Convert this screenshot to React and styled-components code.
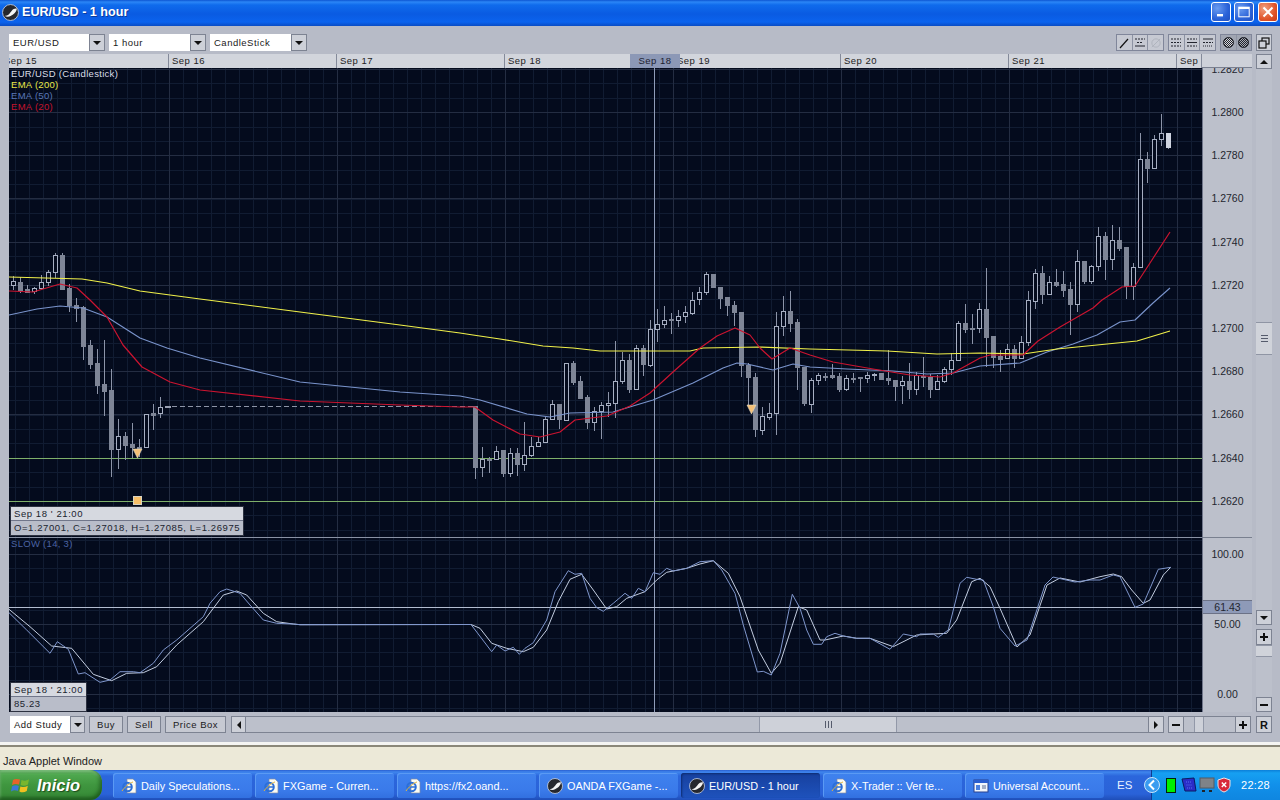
import React from 'react';
import styled, { createGlobalStyle } from 'styled-components';

const Global = createGlobalStyle`
  html, body { margin: 0; padding: 0; background: #b7bbc7; overflow: hidden; }
  * { box-sizing: border-box; }
`;

const UI = `"Liberation Sans", Arial, sans-serif`;
const BG = '#040b1d';

/* ---------- window frame ---------- */
const Win = styled.div`
  width: 1280px; height: 800px; display: flex; flex-direction: column; font-family: ${UI};
`;
const TitleBar = styled.div`
  height: 26px; flex: none; display: flex; align-items: center; padding: 0 2px 2px 2px;
  background: linear-gradient(#0d55d2 0, #2b86f6 2px, #0f6bec 5px, #0a5be2 14px, #0b63ee 22px, #0a4cc4 26px);
`;
const TitleText = styled.span`
  margin-left: 3px; flex: 1; color: #fff; font-size: 12.6px; font-weight: 700;
  text-shadow: 1px 1px 0 #0a3a9e;
`;
const CaptionBtn = styled.div`
  width: 20px; height: 20px; margin-left: ${p => p.$gap}px; border: 1px solid #fff; border-radius: 3px;
  display: flex; align-items: center; justify-content: center;
  background: ${p => p.$close
    ? 'radial-gradient(circle at 30% 30%, #f0a080, #e0552a 60%, #c83a18)'
    : 'radial-gradient(circle at 30% 30%, #6a9cf0, #2a62d8 60%, #2050c0)'};
`;
const Client = styled.div`
  height: 719px; flex: none; display: flex; flex-direction: column;
  padding: 8px 8px 0 9px; background: #b7bbc7; border-bottom: 3px solid #f4f4f2;
`;
const Toolbar = styled.div`
  height: 17px; flex: none; display: flex; align-items: stretch;
`;
const Combo = styled.div`
  display: flex; height: 17px; margin-right: 4px;
`;
const ComboField = styled.div`
  width: ${p => p.$w}px; background: #fff; color: #1a1a1a; font-size: 9.5px; letter-spacing: .5px;
  line-height: 17px; padding-left: 4px;
`;
const ArrowBtn = styled.div`
  width: ${p => p.$w || 16}px; height: ${p => p.$h || 17}px; flex: none; display: flex; align-items: center; justify-content: center;
  background: #cdd0d8; border: 1px solid #7d8392; color: #111;
`;
const Spacer = styled.div` flex: 1; `;
const ToolGroup = styled.div`
  display: flex; width: ${p => p.$w}px; flex: none; margin-right: ${p => p.$mr}px; border: 1px solid #80869a;
  background: ${p => p.$dark ? '#a0a5b2' : '#c6c9d2'};
`;
const ToolBtn = styled.div`
  flex: 1; height: 15px; display: flex; align-items: center; justify-content: center;
  border-left: ${p => p.$first ? 0 : '1px solid #8d93a3'};
`;
const RestoreBtn = styled.div`
  width: 16px; height: 17px; margin-left: 4px; background: #cdd0d8; border: 1px solid #7d8392;
  display: flex; align-items: center; justify-content: center;
`;

/* ---------- main ---------- */
const Main = styled.div`
  margin-top: 3px; height: 658px; flex: none; display: flex;
`;
const PlotColumn = styled.div`
  width: 1243px; flex: none; display: flex; flex-direction: column;
`;
const DateRow = styled.div`
  height: 14px; flex: none; display: flex; position: relative; background: #d2d5dc;
`;
const DateCell = styled.div`
  flex: none; width: ${p => p.$w}px; overflow: hidden; border-right: 1px solid #848a9a; font-size: 9.5px;
  letter-spacing: .5px; line-height: 14px; color: #222; white-space: nowrap;
  padding-left: ${p => p.$pad}px; text-indent: ${p => p.$indent || 0}px;
`;
const DateCursor = styled.div`
  position: absolute; left: 621px; top: 0; width: 50px; height: 14px; background: #8c98b6; color: #1c2130;
  font-size: 9.5px; letter-spacing: .5px; line-height: 14px; text-align: center;
`;
const Body = styled.div`
  height: 644px; flex: none; display: flex;
`;
const ChartArea = styled.div`
  width: 1193px; height: 644px; flex: none; position: relative; overflow: hidden; background: ${BG};
`;
const ChartSvg = styled.svg`
  display: block; width: 1193px; height: 644px;
`;
const Legend = styled.div`
  position: absolute; left: 2px; top: 0; display: flex; flex-direction: column;
`;
const LegendLine = styled.div`
  height: 11px; font-size: 9.5px; line-height: 11px; letter-spacing: .3px; color: ${p => p.$c}; white-space: nowrap;
`;
const SlowLabel = styled(LegendLine)`
  position: absolute; left: 2px; top: 470px;
`;
const InfoBox = styled.div`
  position: absolute; left: 1px; top: ${p => p.$top}px; width: ${p => p.$w}px; border: 1px solid #2c3140;
  background: #b9bdc9; color: #20242e; font-size: 9.5px; letter-spacing: .58px; white-space: nowrap;
`;
const InfoHead = styled.div`
  height: 14px; line-height: 14px; padding-left: 3px; background: #d6d9e0; border-bottom: 1px solid #70768a;
`;
const InfoRow = styled.div`
  height: 14px; line-height: 14px; padding-left: 3px;
`;
const PriceAxis = styled.div`
  width: 50px; height: 644px; flex: none; position: relative; overflow: hidden; background: #bcc0cb;
  border-left: 1px solid #70768a; color: #23262f;
`;
const PriceTick = styled.div`
  position: absolute; left: 0; right: 0; height: 14px; line-height: 14px; text-align: center; font-size: 10.5px;
`;
const PriceTag = styled(PriceTick)`
  background: #8e9ab8; border-top: 1px solid #6c7286; border-bottom: 1px solid #6c7286; line-height: 12px;
`;
const AxisRule = styled.div`
  position: absolute; left: 0; right: 0; height: 1px; background: #79808f;
`;
const CornerCell = styled.div`
  flex: 1; background: #ced1d9; border-bottom: 1px solid #7a8090;
`;
const Scroller = styled.div`
  width: 16px; margin-left: 4px; flex: none; display: flex; flex-direction: column;
`;
const ScrollTrack = styled.div`
  flex: ${p => p.$fixed ? 'none' : 1}; height: ${p => p.$fixed ? p.$fixed + 'px' : 'auto'}; background: #bcc0cb; display: flex; flex-direction: column;
`;
const VThumb = styled.div`
  margin-top: ${p => p.$top}px; height: ${p => p.$h}px; background: #d0d3da; border-top: 1px solid #8f95a4; border-bottom: 1px solid #8f95a4;
  display: flex; align-items: center; justify-content: center; flex: none;
`;
const SmallGap = styled.div` height: 4px; flex: none; `;

/* ---------- bottom ---------- */
const BottomBar = styled.div`
  margin-top: 4px; height: 17px; flex: none; display: flex;
`;
const WhiteBtn = styled.div`
  width: 60px; background: #fff; color: #151515; font-size: 9.5px; letter-spacing: .5px; line-height: 17px; padding-left: 4px; margin-left: 1px;
`;
const TextBtn = styled.div`
  width: ${p => p.$w}px; margin-left: ${p => p.$ml}px; background: #c6c9d2; border: 1px solid #7d8392; color: #1a1a1a;
  font-size: 9.5px; letter-spacing: .5px; line-height: 15px; text-align: center;
`;
const HTrack = styled.div`
  flex: ${p => p.$w ? 'none' : 1}; width: ${p => p.$w ? p.$w + 'px' : 'auto'}; background: #bcc0cb; border-top: 1px solid #7d8392; border-bottom: 1px solid #7d8392;
  display: flex;
`;
const HThumb = styled.div`
  margin-left: ${p => p.$left}px; width: ${p => p.$w}px; background: #ced1d9; border-left: 1px solid #9298a8; border-right: 1px solid #9298a8;
  display: flex; align-items: center; justify-content: center;
`;
const GapH = styled.div` width: ${p => p.$w}px; flex: none; `;

/* ---------- status + taskbar ---------- */
const StatusBar = styled.div`
  height: 25px; flex: none; background: #ece9d8; border-top: 2px solid #8a8778; font-size: 11px; color: #222;
  padding: 7px 0 0 3px; line-height: 15px;
`;
const TaskBar = styled.div`
  height: 30px; flex: none; display: flex; align-items: stretch;
  background: linear-gradient(#2a5fd0 0, #3f86ee 2px, #2b66dc 6px, #2a62d8 24px, #1f4eb8 30px);
`;
const StartBtn = styled.div`
  width: 102px; flex: none; display: flex; align-items: center; padding-left: 11px; gap: 6px;
  border-radius: 0 12px 12px 0; box-shadow: inset -2px -2px 4px #1c5a1c, inset 0 2px 3px #8fd08f;
  background: linear-gradient(#3c8a3c 0, #4fa84f 15%, #3f963f 50%, #388c38 85%, #2a6e2a 100%);
`;
const StartText = styled.span`
  color: #fff; font-size: 16.5px; font-style: italic; font-weight: 700; text-shadow: 1px 1px 1px #1c4a1c;
`;
const Tasks = styled.div`
  flex: 1; display: flex; gap: 3px; padding: 3px 0 2px 11px;
`;
const Task = styled.div`
  width: 139px; flex: none; display: flex; align-items: center; gap: 4px; padding-left: 8px; border-radius: 3px;
  color: #fff; font-size: 10.9px; white-space: nowrap; overflow: hidden;
  background: ${p => p.$on ? 'linear-gradient(#17409e, #1e52bc)' : 'linear-gradient(#3f82ee, #3a7aea 70%, #3270e0)'};
  box-shadow: ${p => p.$on ? 'inset 1px 1px 2px #0e2c70' : 'inset 1px 1px 0 #5a9af4'};
`;
const Lang = styled.div`
  width: 46px; flex: none; color: #e8f0ff; font-size: 11.5px; line-height: 30px; padding-left: 12px;
`;
const Tray = styled.div`
  width: 129px; flex: none; display: flex; align-items: center; color: #fff; font-size: 11px;
  background: linear-gradient(#0c7fd8 0, #16a0f2 3px, #1190ea 50%, #0f86e0 100%); border-left: 1px solid #0f3c90;
`;
const Clock = styled.span` margin-left: 10px; letter-spacing: .3px; `;
const GreenBar = styled.div`
  width: 10px; height: 15px; background: #00f000; border: 1px solid #05210a; margin: 0 5px 0 6px; flex: none;
`;

/* ---------- icons ---------- */
const Ball = ({ size = 16 }) => (
  <svg width={size} height={size} viewBox="0 0 16 16" style={{ flex: 'none' }}>
    <circle cx="8" cy="8" r="7.5" fill="#26282e" stroke="#c8d2e6" strokeWidth=".8" />
    <path d="M2.5 11 C6 11 7 9 9 6.5 C10.5 4.8 12.5 4 14 4.5 C13.5 8 10.5 10 8.5 11 C6.5 12.2 4 12.2 2.5 11Z" fill="#f4f4f4" />
  </svg>
);
const IE = () => (
  <svg width="16" height="16" viewBox="0 0 16 16" style={{ flex: 'none' }}>
    <path d="M6 1h6l3 3v11H6z" fill="#fbfbf2" stroke="#7f8ba8" strokeWidth=".7" />
    <circle cx="6.5" cy="9" r="4.3" fill="none" stroke="#2c6fd8" strokeWidth="2" />
    <path d="M2.5 9h8" stroke="#2c6fd8" strokeWidth="1.6" />
    <path d="M1 13c2-3 7-8 11-9" stroke="#e5b73c" strokeWidth="1" fill="none" />
  </svg>
);
const AppWin = () => (
  <svg width="16" height="16" viewBox="0 0 16 16" style={{ flex: 'none' }}>
    <rect x="1" y="2" width="14" height="12" fill="#f2f5fb" stroke="#27408f" />
    <rect x="1" y="2" width="14" height="3" fill="#2a5ed0" />
    <rect x="3" y="7" width="4" height="5" fill="#4a7fe0" />
    <path d="M9 8h4M9 10h4" stroke="#5a6a90" />
  </svg>
);
const Flag = () => (
  <svg width="20" height="20" viewBox="0 0 20 20" style={{ flex: 'none' }}>
    <path d="M2 5 C4 3.6 6 3.6 9 4.6 L8 9.5 C5.5 8.6 3.4 8.6 1 10Z" fill="#e8632a" />
    <path d="M10.5 5 C13 6 15 6 18 4.2 L17 9.4 C14.4 11 12 11 9.6 10Z" fill="#78b62e" />
    <path d="M1 11.4 C3.4 10 5.5 10 7.8 11 L6.8 16 C4.6 15 2.5 15 0 16.5Z" fill="#3b78d8" />
    <path d="M9.4 11.4 C12 12.4 14.2 12.4 16.8 10.8 L15.8 16 C13 17.6 10.8 17.6 8.4 16.4Z" fill="#f0c020" />
  </svg>
);
const Tri = ({ dir }) => {
  const d = { down: 'M0 0h8L4 4z', up: 'M0 4h8L4 0z', left: 'M4 0v8L0 4z', right: 'M0 0v8l4-4z' }[dir];
  const vert = dir === 'left' || dir === 'right';
  return <svg width={vert ? 4 : 8} height={vert ? 8 : 4} viewBox={vert ? '0 0 4 8' : '0 0 8 4'}><path d={d} fill="#111" /></svg>;
};
const Sign = ({ plus }) => (
  <svg width="8" height="8" viewBox="0 0 8 8"><path d={plus ? 'M0 3h8v2H0zM3 0h2v8H3z' : 'M0 3h8v2H0z'} fill="#111" /></svg>
);
const Lines = ({ v }) => {
  const rows = {
    a: <><path d="M1 3h10" strokeDasharray="2 1" /><path d="M3 6.5h6" strokeDasharray="2 1" /><path d="M1 10h10" /></>,
    b: <><path d="M1 3h10" strokeDasharray="2 1" /><path d="M1 6.5h10" strokeDasharray="2 1" /><path d="M1 10h10" strokeDasharray="2 1" /></>,
    c: <><path d="M1 3h10" strokeDasharray="2 1" /><path d="M1 6.5h10" /><path d="M1 10h10" strokeDasharray="2 1" /></>,
    d: <><path d="M1 3h10" /><path d="M1 6.5h10" strokeDasharray="2 1" /><path d="M1 10h10" strokeDasharray="1 1" /></>,
  }[v];
  return <svg width="12" height="13" viewBox="0 0 12 13" fill="none" stroke="#22252e">{rows}</svg>;
};
const Hatch = ({ id, light }) => (
  <svg width="11" height="11" viewBox="0 0 11 11">
    <defs>
      <pattern id={id} width="2" height="2" patternUnits="userSpaceOnUse">
        <rect width="2" height="2" fill={light ? '#d8dae0' : '#a8acb6'} />
        <rect width="1" height="1" fill="#22242c" /><rect x="1" y="1" width="1" height="1" fill="#22242c" />
      </pattern>
    </defs>
    <circle cx="5.5" cy="5.5" r="5" fill={`url(#${id})`} stroke="#1c1e26" />
  </svg>
);
const Grip = ({ rotate }) => (
  <svg width="7" height="7" viewBox="0 0 7 7" style={rotate ? { transform: 'rotate(90deg)' } : undefined}>
    <path d="M.5 0v7M3.5 0v7M6.5 0v7" stroke="#555b6c" />
  </svg>
);
const WinGlyph = ({ kind }) => (
  <svg width="12" height="12" viewBox="0 0 12 12" fill="none" stroke="#fff">
    {kind === 'min' && <rect x="2" y="8" width="6" height="2.4" fill="#fff" stroke="none" />}
    {kind === 'max' && <><rect x=".8" y="1.2" width="10.4" height="9.6" strokeWidth="1" /><path d="M.8 2h10.4" strokeWidth="2" /></>}
    {kind === 'close' && <path d="M1.5 1.5l9 9M10.5 1.5l-9 9" strokeWidth="2" />}
  </svg>
);

/* ---------- chart data ---------- */
const conv = (ox, oy, rows) => rows.map(([z, hi, t, b, lo, k]) => ({
  c: 13 + 7 * Math.round((ox + z / 3 - 13) / 7),
  hi: oy + hi / 3, t: oy + t / 3, b: oy + b / 3, lo: oy + lo / 3, k,
}));
const candles = [
  ...conv(0, 240, [
    [40,107,124,134,150,'h'],[61,112,125,150,160,'f'],[82,135,148,155,160,'f'],[103,140,143,153,162,'h'],
    [124,106,127,143,145,'h'],[145,90,97,127,137,'h'],[166,38,45,97,115,'h'],[187,38,45,146,146,'f'],
    [208,132,143,195,216,'f'],[229,173,195,203,245,'f'],[250,198,200,317,360,'f'],[271,300,316,371,388,'f'],
    [292,326,370,434,462,'f'],[313,300,433,452,527,'f'],[334,387,451,626,710,'f'],[355,538,589,626,688,'h'],
    [376,576,589,614,660,'f'],[397,549,613,620,654,'f'],[418,597,621,623,650,'f'],[439,522,523,621,625,'h'],
    [460,492,520,524,570,'f'],[481,472,502,520,533,'h'],
  ]),
  ...conv(460, 260, [
    [46,438,438,620,658,'f'],[67,562,597,620,652,'h'],[88,590,596,598,640,'f'],[109,557,572,598,600,'h'],
    [130,571,571,638,650,'f'],[151,565,580,638,650,'h'],[172,563,580,611,648,'f'],[193,487,584,611,632,'h'],
    [214,530,559,584,590,'h'],[235,530,545,559,560,'h'],[256,470,478,545,546,'h'],[277,420,433,478,480,'h'],
    [298,433,433,478,508,'f'],[319,310,310,480,484,'h'],[340,304,310,365,374,'f'],[361,348,364,414,418,'f'],
    [382,405,412,487,507,'f'],[403,440,452,487,512,'h'],[424,425,436,452,538,'h'],[445,395,428,436,470,'h'],
    [466,243,364,428,475,'h'],[487,276,301,364,372,'h'],[508,282,301,386,400,'f'],[529,255,265,386,388,'h'],
    [550,255,265,313,348,'f'],[571,180,206,316,322,'h'],[592,148,193,206,245,'h'],[613,138,181,193,205,'h'],
    [634,160,177,179,222,'f'],[655,150,169,181,200,'h'],[676,138,157,169,188,'h'],[697,95,119,158,165,'h'],
    [718,82,95,118,135,'h'],[739,37,43,95,105,'h'],[760,43,43,82,82,'f'],[781,82,82,113,147,'f'],
    [802,112,112,134,168,'f'],[823,122,134,155,198,'f'],[844,155,155,316,352,'f'],[865,310,314,352,440,'f'],
    [886,340,352,508,530,'f'],
  ]),
  ...conv(740, 260, [
    [67,440,468,510,525,'h'],[88,430,458,470,480,'h'],[109,155,199,458,525,'h'],[130,108,154,199,228,'h'],
    [151,93,154,188,215,'f'],[172,178,187,322,390,'f'],[193,321,321,430,438,'f'],[214,355,361,431,458,'h'],
    [235,340,346,361,376,'h'],[256,340,348,350,362,'f'],[277,312,346,351,358,'f'],[298,340,349,386,396,'f'],
    [319,345,355,386,392,'h'],[340,340,355,357,370,'f'],[361,350,351,353,396,'f'],[382,335,346,355,370,'h'],
    [403,340,341,346,362,'h'],[424,340,340,357,360,'f'],[445,270,355,361,375,'f'],[466,361,361,378,424,'f'],
    [487,348,364,376,432,'h'],[508,308,364,388,416,'f'],[529,335,345,388,406,'h'],[550,290,348,352,382,'f'],
    [571,342,352,388,414,'f'],[592,345,364,388,390,'h'],[613,320,326,364,370,'h'],[634,280,301,326,345,'h'],
    [655,184,190,301,303,'h'],[676,133,190,206,218,'f'],[697,162,203,205,252,'f'],[718,130,148,204,220,'h'],
  ]),
  ...conv(980, 100, [
    [19,505,628,710,800,'f'],[40,708,708,770,803,'f'],[61,750,768,776,815,'f'],[82,732,748,775,776,'h'],
    [103,735,748,775,805,'f'],[124,708,727,775,775,'h'],[145,573,601,727,738,'h'],[166,508,520,602,628,'h'],
    [187,498,520,581,612,'f'],[208,528,547,581,582,'h'],[229,508,547,554,560,'f'],[250,513,553,570,592,'f'],
    [271,545,568,611,704,'f'],[292,450,484,611,635,'h'],[313,484,484,543,552,'f'],[334,496,499,543,552,'h'],
    [355,380,409,499,513,'h'],[376,396,409,476,540,'f'],[397,376,421,476,510,'h'],[418,381,421,443,452,'f'],
    [439,442,442,557,598,'f'],[460,490,502,557,600,'h'],[481,99,178,502,502,'h'],[502,156,178,203,248,'f'],
    [523,105,118,203,203,'h'],[544,42,100,118,137,'h'],[565,100,100,140,146,'l'],
  ]),
];
const pts = a => a.map(p => p.join(',')).join(' ');
const ema200 = [[9,277],[82,279],[107,283],[140,291],[200,299],[300,312],[400,325],[460,333],[473,335],[500,339],[543,346],[573,348],[600,351],[690,351],[703,348],[760,347],[810,349],[887,351],[937,354],[980,353],[1023,354],[1057,349],[1137,341],[1170,331]];
const ema20 = [[9,291],[33,292],[60,284],[77,288],[90,300],[107,317],[123,345],[142,367],[170,382],[200,390],[300,401],[400,405],[460,407],[475,407],[493,420],[520,434],[540,437],[560,432],[575,420],[607,416],[630,406],[650,393],[673,372],[700,348],[717,336],[735,328],[750,335],[760,348],[772,359],[790,348],[810,355],[833,362],[873,369],[910,375],[940,377],[953,373],[980,358],[990,355],[1023,355],[1038,341],[1060,327],[1093,308],[1102,300],[1122,287],[1135,286],[1150,263],[1170,232]];
const ema50 = [[9,315],[37,309],[60,306],[83,308],[107,317],[140,338],[167,348],[200,358],[300,382],[400,392],[460,396],[480,400],[527,414],[550,417],[570,413],[613,412],[653,400],[693,383],[723,368],[737,363],[747,364],[773,370],[793,364],[810,367],[847,369],[893,371],[927,374],[953,373],[980,366],[1020,363],[1047,352],[1073,344],[1097,335],[1120,322],[1135,320],[1153,303],[1170,288]];

const zp = (ox, oy, a) => a.map(([x, y]) => [+(ox + x / 3).toFixed(1), +(oy + y / 3).toFixed(1)]);
const fast = [
  ...zp(0,490,[[27,368],[80,420],[150,490],[172,455],[205,478],[235,552],[255,548],[300,577],[330,570],[360,545],[400,545],[420,548],[460,520],[490,480],[530,450],[610,380],[630,340],[660,305],[680,297],[720,310],[750,345],[790,390],[830,400],[880,402],[900,404]]),
  [471,624.5],
  ...zp(400,540,[[275,335],[290,315],[315,333],[340,322],[358,343],[375,325],[400,308],[440,240],[465,155],[505,92],[525,103],[545,100],[570,175],[590,203],[610,214],[640,190],[675,160],[695,175],[715,145],[735,155],[760,98],[780,103],[800,85],[820,93],[860,85],[900,65]]),
  ...zp(700,540,[[40,62],[65,90],[105,160],[130,255],[172,396],[190,394],[214,405],[240,340],[277,163],[300,205],[320,270],[340,313],[365,313],[380,290],[405,280],[430,288],[470,295],[510,295],[570,328],[610,282],[650,290],[660,282],[700,282],[715,292],[745,270],[780,130],[800,112],[830,118],[850,120],[880,200],[900,265]]),
  [1015,646],[1027,640],[1045,585],[1053,577],[1075,582],[1090,580],
  ...zp(1100,530,[[0,150],[40,135],[60,140],[105,232],[130,222],[175,118],[212,112]]),
];
const slow = [
  ...zp(0,490,[[27,358],[90,410],[155,468],[215,475],[280,553],[335,572],[380,550],[430,548],[470,530],[530,465],[610,395],[640,355],[670,315],[710,303],[740,315],[790,370],[830,395],[880,402],[900,404]]),
  [471,624.5],
  ...zp(400,540,[[240,265],[275,310],[320,325],[370,335],[400,322],[440,270],[475,185],[510,118],[545,103],[580,150],[620,207],[650,200],[680,175],[735,155],[770,120],[800,97],[860,85],[900,72]]),
  ...zp(700,540,[[40,62],[85,100],[120,170],[175,330],[214,400],[240,370],[295,200],[320,210],[360,300],[375,300],[430,288],[470,295],[510,295],[580,320],[650,285],[700,282],[740,280],[770,240],[815,125],[840,115],[870,140],[900,205]]),
  [1017,647],[1030,635],[1047,585],[1060,578],[1080,582],
  ...zp(1100,530,[[0,140],[40,132],[65,140],[95,180],[130,220],[150,210],[190,135],[212,112]]),
];

const range = (a, b, s) => { const r = []; for (let v = a; v <= b; v += s) r.push(v); return r; };
const Y0 = 68, Y1 = 712, X0 = 9, X1 = 1202;
const major = range(1, 8, 1).map(i => 1 + 168 * i);
const minorV = range(1, 90, 1).map(i => 1 + 14 * i).filter(x => x > X0 && x < X1);
const priceY = p => 112 + (2800 - p) / 20 * 43.2;
const prices = range(2620, 2820, 20);
const MINOR = '#111c32', MAJOR = '#242d42', GREEN = '#7fb06a';

const Candle = ({ c, hi, t, b, lo, k }) => {
  const x = c + .5;
  const h = Math.max(Math.round(b) - Math.round(t), 1);
  const fill = k === 'h' ? BG : k === 'l' ? '#cfd4e0' : '#7e8596';
  const stroke = k === 'h' ? '#a7afc2' : k === 'l' ? '#cfd4e0' : '#7e8596';
  return (
    <g>
      <line x1={x} x2={x} y1={Math.round(hi)} y2={Math.round(lo)} stroke="#8c94a8" />
      <rect x={c - 1.5} y={Math.round(t) + .5} width="4" height={h} fill={fill} stroke={stroke} />
    </g>
  );
};

const Chart = () => (
  <ChartSvg viewBox={`${X0} ${Y0} ${X1 - X0} ${Y1 - Y0}`}>
    <g shapeRendering="crispEdges">
      {minorV.map(x => <line key={x} x1={x + .5} x2={x + .5} y1={Y0} y2={Y1} stroke={MINOR} />)}
      {range(0, 32, 1).map(i => <line key={i} x1={X0} x2={X1} y1={69.5 + 14.4 * i} y2={69.5 + 14.4 * i} stroke={MINOR} />)}
      {range(0, 12, 1).map(i => <line key={i} x1={X0} x2={X1} y1={540.5 + 14 * i} y2={540.5 + 14 * i} stroke={MINOR} />)}
      {major.map(x => <line key={x} x1={x + .5} x2={x + .5} y1={Y0} y2={Y1} stroke={MAJOR} />)}
      {prices.map(p => <line key={p} x1={X0} x2={X1} y1={Math.round(priceY(p)) + .5} y2={Math.round(priceY(p)) + .5} stroke={MAJOR} />)}
      {[554, 624, 694].map(y => <line key={y} x1={X0} x2={X1} y1={y + .5} y2={y + .5} stroke={MAJOR} />)}
      <line x1={X0} x2={X1} y1="458.5" y2="458.5" stroke={GREEN} />
      <line x1={X0} x2={X1} y1="501.5" y2="501.5" stroke={GREEN} />
      <line x1="654.5" x2="654.5" y1={Y0} y2={Y1} stroke="#8f9cb8" />
      <line x1={X0} x2={X1} y1="607.5" y2="607.5" stroke="#b4bdd0" />
      <line x1={X0} x2={X1} y1="537.5" y2="537.5" stroke="#8a92a4" />
      {candles.map((d, i) => <Candle key={i} {...d} />)}
      <line x1="165" x2="171" y1="406.5" y2="406.5" stroke="#9aa1b3" strokeWidth="2" />
      <line x1="172" x2="475" y1="406.5" y2="406.5" stroke="#8d94a6" strokeDasharray="5 3" />
    </g>
    <g fill="none" strokeLinejoin="round">
      <polyline points={pts(ema50)} stroke="#7a94cc" strokeWidth="1.1" />
      <polyline points={pts(ema200)} stroke="#f0f04a" strokeWidth="1.1" />
      <polyline points={pts(ema20)} stroke="#cc1430" strokeWidth="1.2" />
      <line x1="300" x2="471" y1="624.5" y2="624.5" stroke="#5a78b8" shapeRendering="crispEdges" />
      <polyline points={pts(slow)} stroke="#c3cde0" strokeWidth="1" />
      <polyline points={pts(fast)} stroke="#7f96cc" strokeWidth="1" />
    </g>
    <path d="M133 449h9l-4.5 9z" fill="#f5c078" stroke="#e8e0c8" strokeWidth=".6" />
    <path d="M747 405h9l-4.5 9z" fill="#f5c078" stroke="#e8e0c8" strokeWidth=".6" />
    <rect x="133.5" y="496.5" width="8" height="8" fill="#f7bf68" stroke="#d8d4c4" />
  </ChartSvg>
);

const tasks = [
  { t: 'Daily Speculations...', i: <IE /> },
  { t: 'FXGame - Curren...', i: <IE /> },
  { t: 'https://fx2.oand...', i: <IE /> },
  { t: 'OANDA FXGame -...', i: <Ball /> },
  { t: 'EUR/USD - 1 hour', i: <Ball />, on: true },
  { t: 'X-Trader :: Ver te...', i: <IE /> },
  { t: 'Universal Account...', i: <AppWin /> },
];

export default function App() {
  return (
    <Win>
      <Global />
      <TitleBar>
        <Ball size={17} />
        <TitleText>EUR/USD - 1 hour</TitleText>
        <CaptionBtn $gap={0}><WinGlyph kind="min" /></CaptionBtn>
        <CaptionBtn $gap={3}><WinGlyph kind="max" /></CaptionBtn>
        <CaptionBtn $gap={4} $close><WinGlyph kind="close" /></CaptionBtn>
      </TitleBar>
      <Client>
        <Toolbar>
          <Combo><ComboField $w={80}>EUR/USD</ComboField><ArrowBtn><Tri dir="down" /></ArrowBtn></Combo>
          <Combo><ComboField $w={81}>1 hour</ComboField><ArrowBtn><Tri dir="down" /></ArrowBtn></Combo>
          <Combo><ComboField $w={81}>CandleStick</ComboField><ArrowBtn><Tri dir="down" /></ArrowBtn></Combo>
          <Spacer />
          <ToolGroup $w={48} $mr={4}>
            <ToolBtn $first><svg width="12" height="12" viewBox="0 0 12 12"><path d="M2 11L10 2" stroke="#111" strokeWidth="1.2" /></svg></ToolBtn>
            <ToolBtn><Lines v="a" /></ToolBtn>
            <ToolBtn><svg width="12" height="12" viewBox="0 0 13 13" fill="none" stroke="#aeb2bc"><circle cx="6.5" cy="6.5" r="4.5" /><path d="M2 11L11 2" /></svg></ToolBtn>
          </ToolGroup>
          <ToolGroup $w={48} $mr={4}>
            <ToolBtn $first><Lines v="b" /></ToolBtn>
            <ToolBtn><Lines v="c" /></ToolBtn>
            <ToolBtn><Lines v="d" /></ToolBtn>
          </ToolGroup>
          <ToolGroup $w={32} $mr={0} $dark>
            <ToolBtn $first><Hatch id="h1" light /></ToolBtn>
            <ToolBtn><Hatch id="h2" /></ToolBtn>
          </ToolGroup>
          <RestoreBtn>
            <svg width="12" height="12" viewBox="0 0 12 12" fill="none" stroke="#111" strokeWidth="1.2"><rect x="4" y="1" width="7" height="6" /><rect x="1" y="4" width="7" height="7" fill="#cdd0d8" /></svg>
          </RestoreBtn>
        </Toolbar>
        <Main>
          <PlotColumn>
            <DateRow>
              <DateCell $w={160} $pad={0} $indent={-5}>Sep 15</DateCell>
              {['Sep 16', 'Sep 17', 'Sep 18', 'Sep 19', 'Sep 20', 'Sep 21'].map((d, i) => (
                <DateCell key={d} $w={168} $pad={i === 3 ? 4 : 3}>{d}</DateCell>
              ))}
              <DateCell $w={25} $pad={3}>Sep</DateCell>
              <CornerCell />
              <DateCursor>Sep 18</DateCursor>
            </DateRow>
            <Body>
              <ChartArea>
                <Chart />
                <Legend>
                  <LegendLine $c="#d9dde6">EUR/USD (Candlestick)</LegendLine>
                  <LegendLine $c="#e9e948">EMA (200)</LegendLine>
                  <LegendLine $c="#5a78b8">EMA (50)</LegendLine>
                  <LegendLine $c="#c5142e">EMA (20)</LegendLine>
                </Legend>
                <InfoBox $top={438} $w={234}>
                  <InfoHead>Sep 18 ' 21:00</InfoHead>
                  <InfoRow>O=1.27001, C=1.27018, H=1.27085, L=1.26975</InfoRow>
                </InfoBox>
                <SlowLabel $c="#4c64a4">SLOW (14, 3)</SlowLabel>
                <InfoBox $top={614} $w={77}>
                  <InfoHead>Sep 18 ' 21:00</InfoHead>
                  <InfoRow>85.23</InfoRow>
                </InfoBox>
              </ChartArea>
              <PriceAxis>
                {prices.map(p => (
                  <PriceTick key={p} style={{ top: priceY(p) - Y0 - 7 }}>{`1.${p}`}</PriceTick>
                ))}
                <AxisRule style={{ top: 537 - Y0 }} />
                {[[554, '100.00'], [624, '50.00'], [694, '0.00']].map(([y, t]) => (
                  <PriceTick key={t} style={{ top: y - Y0 - 7 }}>{t}</PriceTick>
                ))}
                <PriceTag style={{ top: 600 - Y0 }}>61.43</PriceTag>
              </PriceAxis>
            </Body>
          </PlotColumn>
          <Scroller>
            <ArrowBtn $w={16} $h={15}><Tri dir="up" /></ArrowBtn>
            <ScrollTrack>
              <VThumb $top={253} $h={33}><Grip rotate /></VThumb>
            </ScrollTrack>
            <ArrowBtn $w={16} $h={15}><Tri dir="down" /></ArrowBtn>
            <SmallGap />
            <ArrowBtn $w={16} $h={16}><Sign plus /></ArrowBtn>
            <ScrollTrack $fixed={52}>
              <VThumb $top={0} $h={12} />
            </ScrollTrack>
            <ArrowBtn $w={16} $h={15}><Sign /></ArrowBtn>
          </Scroller>
        </Main>
        <BottomBar>
          <WhiteBtn>Add Study</WhiteBtn>
          <ArrowBtn $w={15}><Tri dir="down" /></ArrowBtn>
          <TextBtn $w={34} $ml={4}>Buy</TextBtn>
          <TextBtn $w={34} $ml={4}>Sell</TextBtn>
          <TextBtn $w={61} $ml={4}>Price Box</TextBtn>
          <GapH $w={5} />
          <ArrowBtn $w={15}><Tri dir="left" /></ArrowBtn>
          <HTrack>
            <HThumb $left={513} $w={138}><Grip /></HThumb>
          </HTrack>
          <ArrowBtn $w={16}><Tri dir="right" /></ArrowBtn>
          <GapH $w={4} />
          <ArrowBtn $w={16}><Sign /></ArrowBtn>
          <HTrack $w={51}>
            <HThumb $left={10} $w={10} />
          </HTrack>
          <ArrowBtn $w={16}><Sign plus /></ArrowBtn>
          <GapH $w={5} />
          <ArrowBtn $w={16}><strong style={{ fontSize: 11 }}>R</strong></ArrowBtn>
        </BottomBar>
      </Client>
      <StatusBar>Java Applet Window</StatusBar>
      <TaskBar>
        <StartBtn><Flag /><StartText>Inicio</StartText></StartBtn>
        <Tasks>
          {tasks.map(t => <Task key={t.t} $on={t.on}>{t.i}<span>{t.t}</span></Task>)}
        </Tasks>
        <Lang>ES</Lang>
        <Tray>
          <svg width="16" height="18" viewBox="0 0 16 18" style={{ marginLeft: -8, flex: 'none' }}>
            <circle cx="8" cy="9" r="7.5" fill="#3a9cf0" stroke="#c8e4fb" />
            <path d="M10 4.5L5.5 9l4.5 4.5" fill="none" stroke="#fff" strokeWidth="2" />
          </svg>
          <GreenBar />
          <svg width="16" height="16" viewBox="0 0 16 16" style={{ flex: 'none' }}>
            <path d="M1 2l3 12h11L13 1z" fill="#2a2cc8" stroke="#0a1a60" />
            <path d="M5 5h6M5.5 8h6M6 11h6" stroke="#5a70f0" strokeDasharray="1 1" />
          </svg>
          <svg width="16" height="16" viewBox="0 0 16 16" style={{ flex: 'none', marginLeft: 2 }}>
            <rect x="1" y="1" width="14" height="10" fill="#7f8388" stroke="#565a60" />
            <path d="M3 14h3M10 14h3" stroke="#20242a" strokeWidth="2" />
          </svg>
          <svg width="14" height="16" viewBox="0 0 14 16" style={{ flex: 'none', marginLeft: 2 }}>
            <path d="M7 1l6 2v5c0 3.6-3 6-6 7-3-1-6-3.4-6-7V3z" fill="#d8283a" stroke="#f0e4e4" />
            <path d="M4.8 5.5l4.4 4.6M9.2 5.5L4.8 10.1" stroke="#fff" strokeWidth="1.4" />
          </svg>
          <Clock>22:28</Clock>
        </Tray>
      </TaskBar>
    </Win>
  );
}
